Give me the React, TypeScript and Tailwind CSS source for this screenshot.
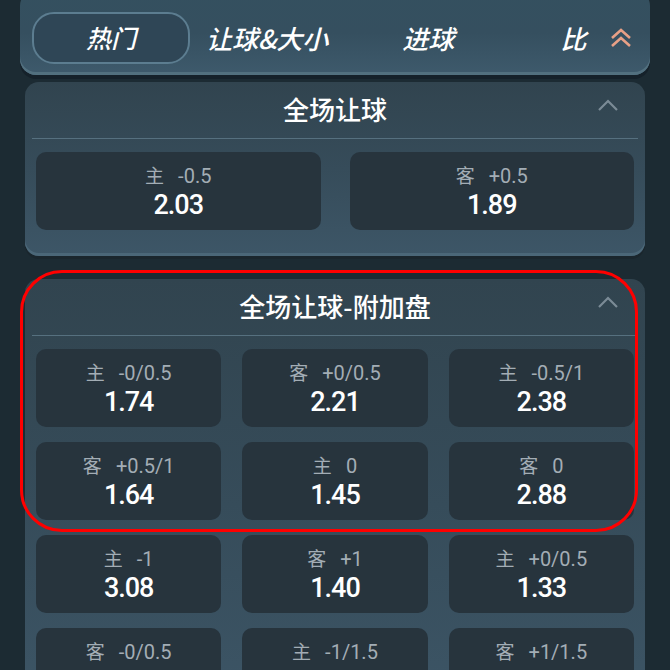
import { ReactNode } from 'react';

const cjk = { fontFamily: '"Noto Sans CJK SC", "Noto Sans", sans-serif' };
const num = { fontFamily: 'Roboto, "Noto Sans CJK SC", sans-serif' };

type Odd = { side: string; line: string; price: string };

const main: Odd[] = [
  { side: '主', line: '-0.5', price: '2.03' },
  { side: '客', line: '+0.5', price: '1.89' },
];

const extra: Odd[] = [
  { side: '主', line: '-0/0.5', price: '1.74' },
  { side: '客', line: '+0/0.5', price: '2.21' },
  { side: '主', line: '-0.5/1', price: '2.38' },
  { side: '客', line: '+0.5/1', price: '1.64' },
  { side: '主', line: '0', price: '1.45' },
  { side: '客', line: '0', price: '2.88' },
  { side: '主', line: '-1', price: '3.08' },
  { side: '客', line: '+1', price: '1.40' },
  { side: '主', line: '+0/0.5', price: '1.33' },
  { side: '客', line: '-0/0.5', price: '2.42' },
  { side: '主', line: '-1/1.5', price: '3.71' },
  { side: '客', line: '+1/1.5', price: '1.21' },
];

function Chevron() {
  return (
    <svg width="22" height="14" viewBox="0 0 22 14" fill="none" className="absolute right-[26px] top-[16px]">
      <path d="M2 12 L11 3 L20 12" stroke="#7b8b96" strokeWidth="2.2" />
    </svg>
  );
}

function Cell({ odd }: { odd: Odd }) {
  return (
    <div className="flex h-[78px] flex-col items-center justify-center rounded-[10px] bg-[#27343d]">
      <div className="flex items-baseline gap-[14px] text-[19px] leading-[24px] text-[#a3adb5]" style={cjk}>
        <span>{odd.side}</span>
        <span className="text-[20px]" style={num}>{odd.line}</span>
      </div>
      <div className="mt-[2px] text-[27px] font-medium leading-[30px] tracking-[-1px] text-white" style={num}>{odd.price}</div>
    </div>
  );
}

function Panel({ title, children }: { title: string; children: ReactNode }) {
  return (
    <div className="relative mx-[25px] rounded-[14px] bg-gradient-to-b from-[#31444f] via-[#364c5a] to-[#3d5667] shadow-[0_3px_0_#1a262d,inset_0_-3px_0_#4b6778]">
      <div className="flex h-[52px] items-center justify-center text-[26px] font-medium text-white" style={cjk}>{title}</div>
      <Chevron />
      <div className="mx-[7px] mt-[4px] h-px bg-[#56707f]" />
      <div className="px-[11px] pb-[26px] pt-[13px]">{children}</div>
    </div>
  );
}

export default function App() {
  const tabs = ['热门', '让球&大小', '进球', '比'];
  return (
    <div className="relative h-[670px] w-[670px] overflow-hidden bg-[#1c2b33]">
      <div className="mx-[20px] mt-[-10px] flex h-[85px] items-center rounded-[16px] bg-gradient-to-b from-[#34505f] via-[#354f5f] to-[#3e5a6c] pl-[12px] pr-[18px] pt-[10px] shadow-[0_4px_0_#15212a,inset_0_-3px_0_#52707f]">
        <div className="flex h-[52px] w-[158px] items-center justify-center rounded-[22px] border-2 border-[#5c7d90] bg-[#2f4656] text-[25px] font-medium italic text-white" style={cjk}>
          {tabs[0]}
        </div>
        <div className="ml-[16px] text-[26px] font-medium italic text-white" style={cjk}>{tabs[1]}</div>
        <div className="ml-[74px] text-[26px] font-medium italic text-white" style={cjk}>{tabs[2]}</div>
        <div className="ml-[106px] text-[26px] font-medium italic text-white" style={cjk}>{tabs[3]}</div>
        <svg width="22" height="22" viewBox="0 0 22 22" fill="none" className="ml-auto">
          <path d="M2 11 L11 3 L20 11" stroke="#e8a086" strokeWidth="2.6" />
          <path d="M2 19 L11 11 L20 19" stroke="#e8a086" strokeWidth="2.6" />
        </svg>
      </div>

      <div className="mt-[7px]">
        <Panel title="全场让球">
          <div className="grid grid-cols-2 gap-[29px]">
            {main.map((o, i) => <Cell key={i} odd={o} />)}
          </div>
        </Panel>
      </div>

      <div className="mt-[23px]">
        <Panel title="全场让球-附加盘">
          <div className="grid grid-cols-3 gap-x-[21px] gap-y-[15px]">
            {extra.map((o, i) => <Cell key={i} odd={o} />)}
          </div>
        </Panel>
      </div>

      <div className="pointer-events-none absolute left-[20px] top-[270px] h-[262px] w-[618px] rounded-[42px] border-[3px] border-[#ff0000]" />
    </div>
  );
}
